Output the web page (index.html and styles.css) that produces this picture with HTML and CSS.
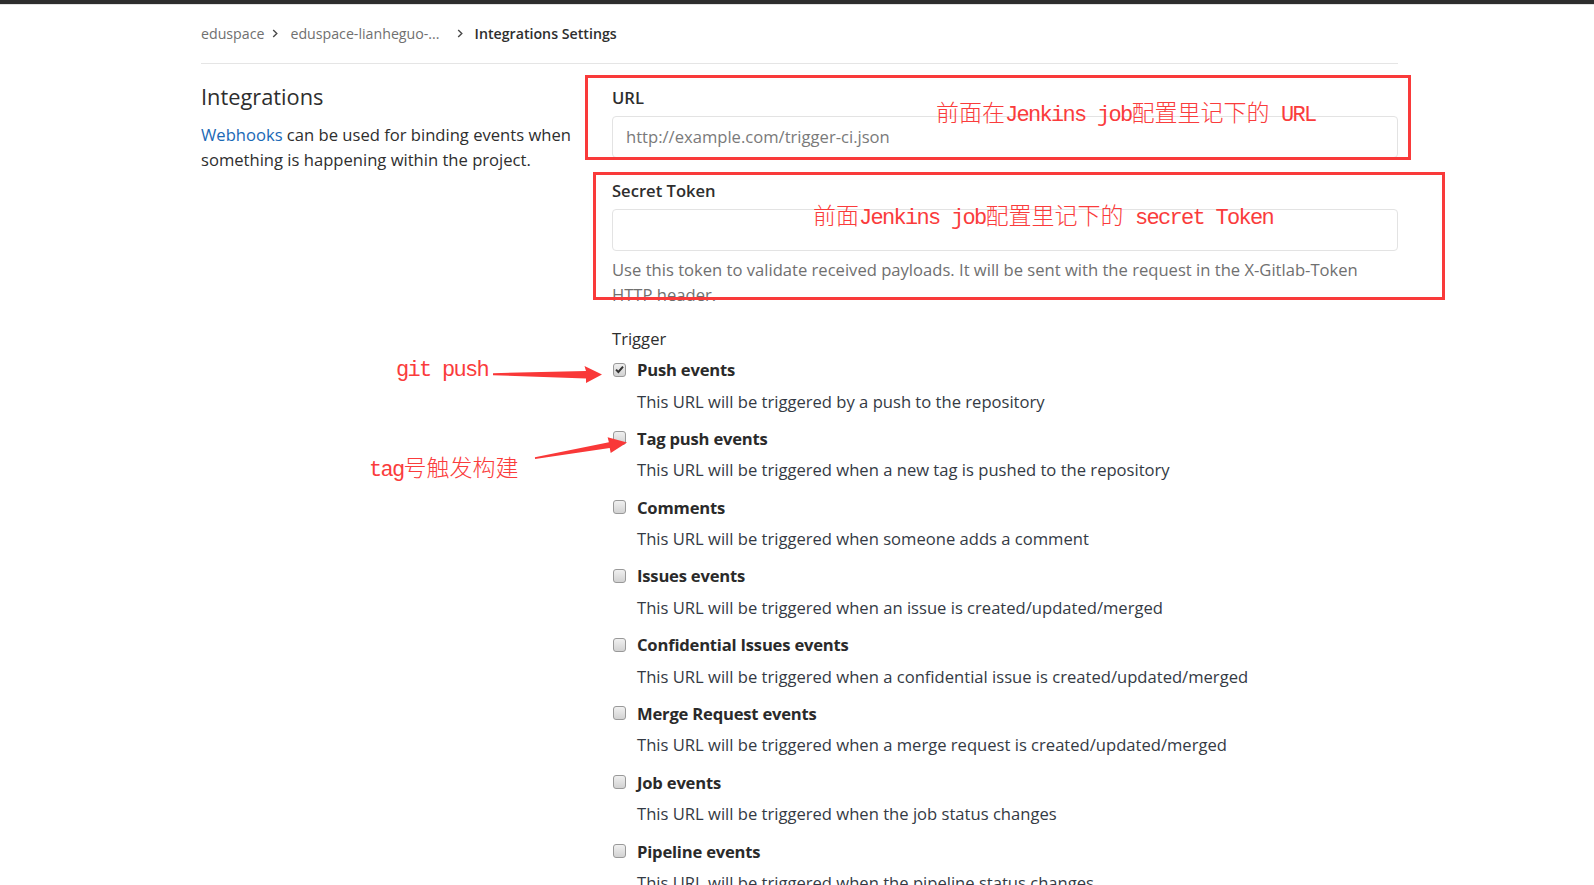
FILE: index.html
```html
<!DOCTYPE html>
<html lang="en">
<head>
<meta charset="utf-8">
<title>Integrations Settings</title>
<link rel="stylesheet" href="styles.css">
</head>
<body>
<div class="topbar"></div>
<div class="page">
  <nav class="breadcrumbs">
    <span class="crumb">eduspace</span>
    <svg class="chev" width="6" height="9" viewBox="0 0 6 9"><path d="M1.2 1 L4.8 4.5 L1.2 8" fill="none" stroke="#4a4a4a" stroke-width="1.4"/></svg>
    <span class="crumb crumb-long">eduspace-lianheguo-...</span>
    <svg class="chev chev2" width="6" height="9" viewBox="0 0 6 9"><path d="M1.2 1 L4.8 4.5 L1.2 8" fill="none" stroke="#4a4a4a" stroke-width="1.4"/></svg>
    <span class="crumb crumb-current">Integrations Settings</span>
  </nav>

  <div class="row">
    <div class="side">
      <h4 class="side-title">Integrations</h4>
      <p class="side-text"><a class="link" href="#">Webhooks</a> can be used for binding events when something is happening within the project.</p>
    </div>

    <div class="form">
      <label class="label-bold">URL</label>
      <div class="input"><span class="placeholder">http://example.com/trigger-ci.json</span></div>

      <label class="label-bold label-gap">Secret Token</label>
      <div class="input"></div>
      <p class="help">Use this token to validate received payloads. It will be sent with the request in the X-Gitlab-Token HTTP header.</p>

      <div class="trigger">Trigger</div>

      <ul class="events">
        <li class="event">
          <div class="event-head"><span class="cb checked"><svg width="11" height="11" viewBox="0 0 11 11"><path d="M2 5.6 L4.4 8 L9 2.6" fill="none" stroke="#333" stroke-width="2"/></svg></span><strong>Push events</strong></div>
          <p class="event-desc">This URL will be triggered by a push to the repository</p>
        </li>
        <li class="event">
          <div class="event-head"><span class="cb"></span><strong>Tag push events</strong></div>
          <p class="event-desc">This URL will be triggered when a new tag is pushed to the repository</p>
        </li>
        <li class="event">
          <div class="event-head"><span class="cb"></span><strong>Comments</strong></div>
          <p class="event-desc">This URL will be triggered when someone adds a comment</p>
        </li>
        <li class="event">
          <div class="event-head"><span class="cb"></span><strong>Issues events</strong></div>
          <p class="event-desc">This URL will be triggered when an issue is created/updated/merged</p>
        </li>
        <li class="event">
          <div class="event-head"><span class="cb"></span><strong>Confidential Issues events</strong></div>
          <p class="event-desc">This URL will be triggered when a confidential issue is created/updated/merged</p>
        </li>
        <li class="event">
          <div class="event-head"><span class="cb"></span><strong>Merge Request events</strong></div>
          <p class="event-desc">This URL will be triggered when a merge request is created/updated/merged</p>
        </li>
        <li class="event">
          <div class="event-head"><span class="cb"></span><strong>Job events</strong></div>
          <p class="event-desc">This URL will be triggered when the job status changes</p>
        </li>
        <li class="event">
          <div class="event-head"><span class="cb"></span><strong>Pipeline events</strong></div>
          <p class="event-desc">This URL will be triggered when the pipeline status changes</p>
        </li>
      </ul>
    </div>
  </div>
</div>

<!-- annotation overlays -->
<div class="redbox box-url"></div>
<div class="redbox box-token"></div>
<div class="note note-url">前面在<span class="lat">Jenkins job</span>配置里记下的<span class="lat"> URL</span></div>
<div class="note note-token">前面<span class="lat">Jenkins job</span>配置里记下的<span class="lat"> secret Token</span></div>
<div class="note note-push"><span class="lat">git push</span></div>
<div class="note note-tag"><span class="lat">tag</span>号触发构建</div>
<svg class="arrows" width="1594" height="885" viewBox="0 0 1594 885">
  <polygon fill="#f93838" points="493,373.2 586,371 584.5,366 602,374.5 586,383 586,378.5 493,375.2"/>
  <polygon fill="#f93838" points="534.9,457.2 608.9,442.2 607.6,437.2 627,442.5 610.7,453 609.7,448 535.1,458.9"/>
</svg>
</body>
</html>
```

FILE: styles.css
```css
* { box-sizing: border-box; }

html, body {
  margin: 0;
  padding: 0;
  background: #fff;
}

body {
  font-family: "Open Sans", "Noto Sans", sans-serif;
  font-size: 16.6px;
  color: #2e2e2e;
  position: relative;
  overflow: hidden;
  height: 885px;
}

.topbar {
  height: 5px;
  background: #2d2d2d;
  border-bottom: 1px solid #e2e2e2;
}

.page {
  margin-left: 201px;
  width: 1197px;
}

.breadcrumbs {
  display: flex;
  align-items: center;
  padding: 16px 0 17px;
  border-bottom: 1px solid #e5e5e5;
  font-size: 14.2px;
  line-height: 25px;
}

.crumb { color: #707070; }
.crumb-current { color: #2e2e2e; font-weight: 600; }

.chev { margin: 0 12px 0 8px; }
.chev2 { margin: 0 12px 0 17px; }

.row {
  display: grid;
  grid-template-columns: 379px 786px;
  column-gap: 32px;
}

.side-title {
  margin: 18.5px 0 0;
  font-size: 21.8px;
  line-height: 27px;
  font-weight: 400;
  color: #2e2e2e;
}

.side-text {
  margin: 12px 0 0;
  line-height: 25.4px;
}

.link { color: #1b69b6; text-decoration: none; }

.form { padding-top: 21px; }

.label-bold {
  display: block;
  font-weight: 600;
  line-height: 25px;
}

.label-gap { margin-top: 20.5px; }

.input {
  margin-top: 5.5px;
  height: 42px;
  border: 1px solid #e3e3e3;
  border-radius: 4px;
  padding: 0 13px;
  display: flex;
  align-items: center;
}

.placeholder { color: #7a7a7a; }

.help {
  margin: 7.5px 0 0;
  color: #707070;
  line-height: 24.5px;
}

.trigger {
  margin-top: 19px;
  line-height: 25px;
}

.events {
  list-style: none;
  margin: 6px 0 0;
  padding: 0;
}

.event { margin-bottom: 12.3px; }

.event-head {
  display: flex;
  align-items: center;
  line-height: 25px;
}

.event-head strong { font-weight: 700; color: #2a2a2a; letter-spacing: -0.2px; }

.cb {
  width: 13px;
  height: 14px;
  margin: 0 11px 0 1px;
  border: 1px solid #999;
  border-radius: 3px;
  background: linear-gradient(#f0f0f0, #d2d2d2);
  display: flex;
  align-items: center;
  justify-content: center;
  flex: none;
}

.event-desc {
  margin: 6.5px 0 0 25px;
  line-height: 25px;
  color: #343a44;
}

/* annotations */
.redbox {
  position: absolute;
  border: 3.3px solid #f93a3a;
}
.box-url { left: 585px; top: 75px; width: 826px; height: 85px; }
.box-token { left: 593px; top: 172px; width: 852px; height: 128px; }

.note {
  position: absolute;
  font-family: "Noto Sans CJK SC", "Liberation Mono", sans-serif;
  font-size: 23px;
  font-weight: 300;
  line-height: 30px;
  color: #fa3c3c;
  white-space: pre;
}
.lat {
  font-family: "Liberation Mono", monospace;
  font-size: 22px;
  font-weight: 400;
  letter-spacing: -1.7px;
}
.note-url { left: 936px; top: 96px; }
.note-token { left: 813px; top: 199px; }
.note-push { left: 396px; top: 351px; }
.note-tag { left: 369px; top: 451px; }

.arrows {
  position: absolute;
  left: 0;
  top: 0;
  pointer-events: none;
}
```
